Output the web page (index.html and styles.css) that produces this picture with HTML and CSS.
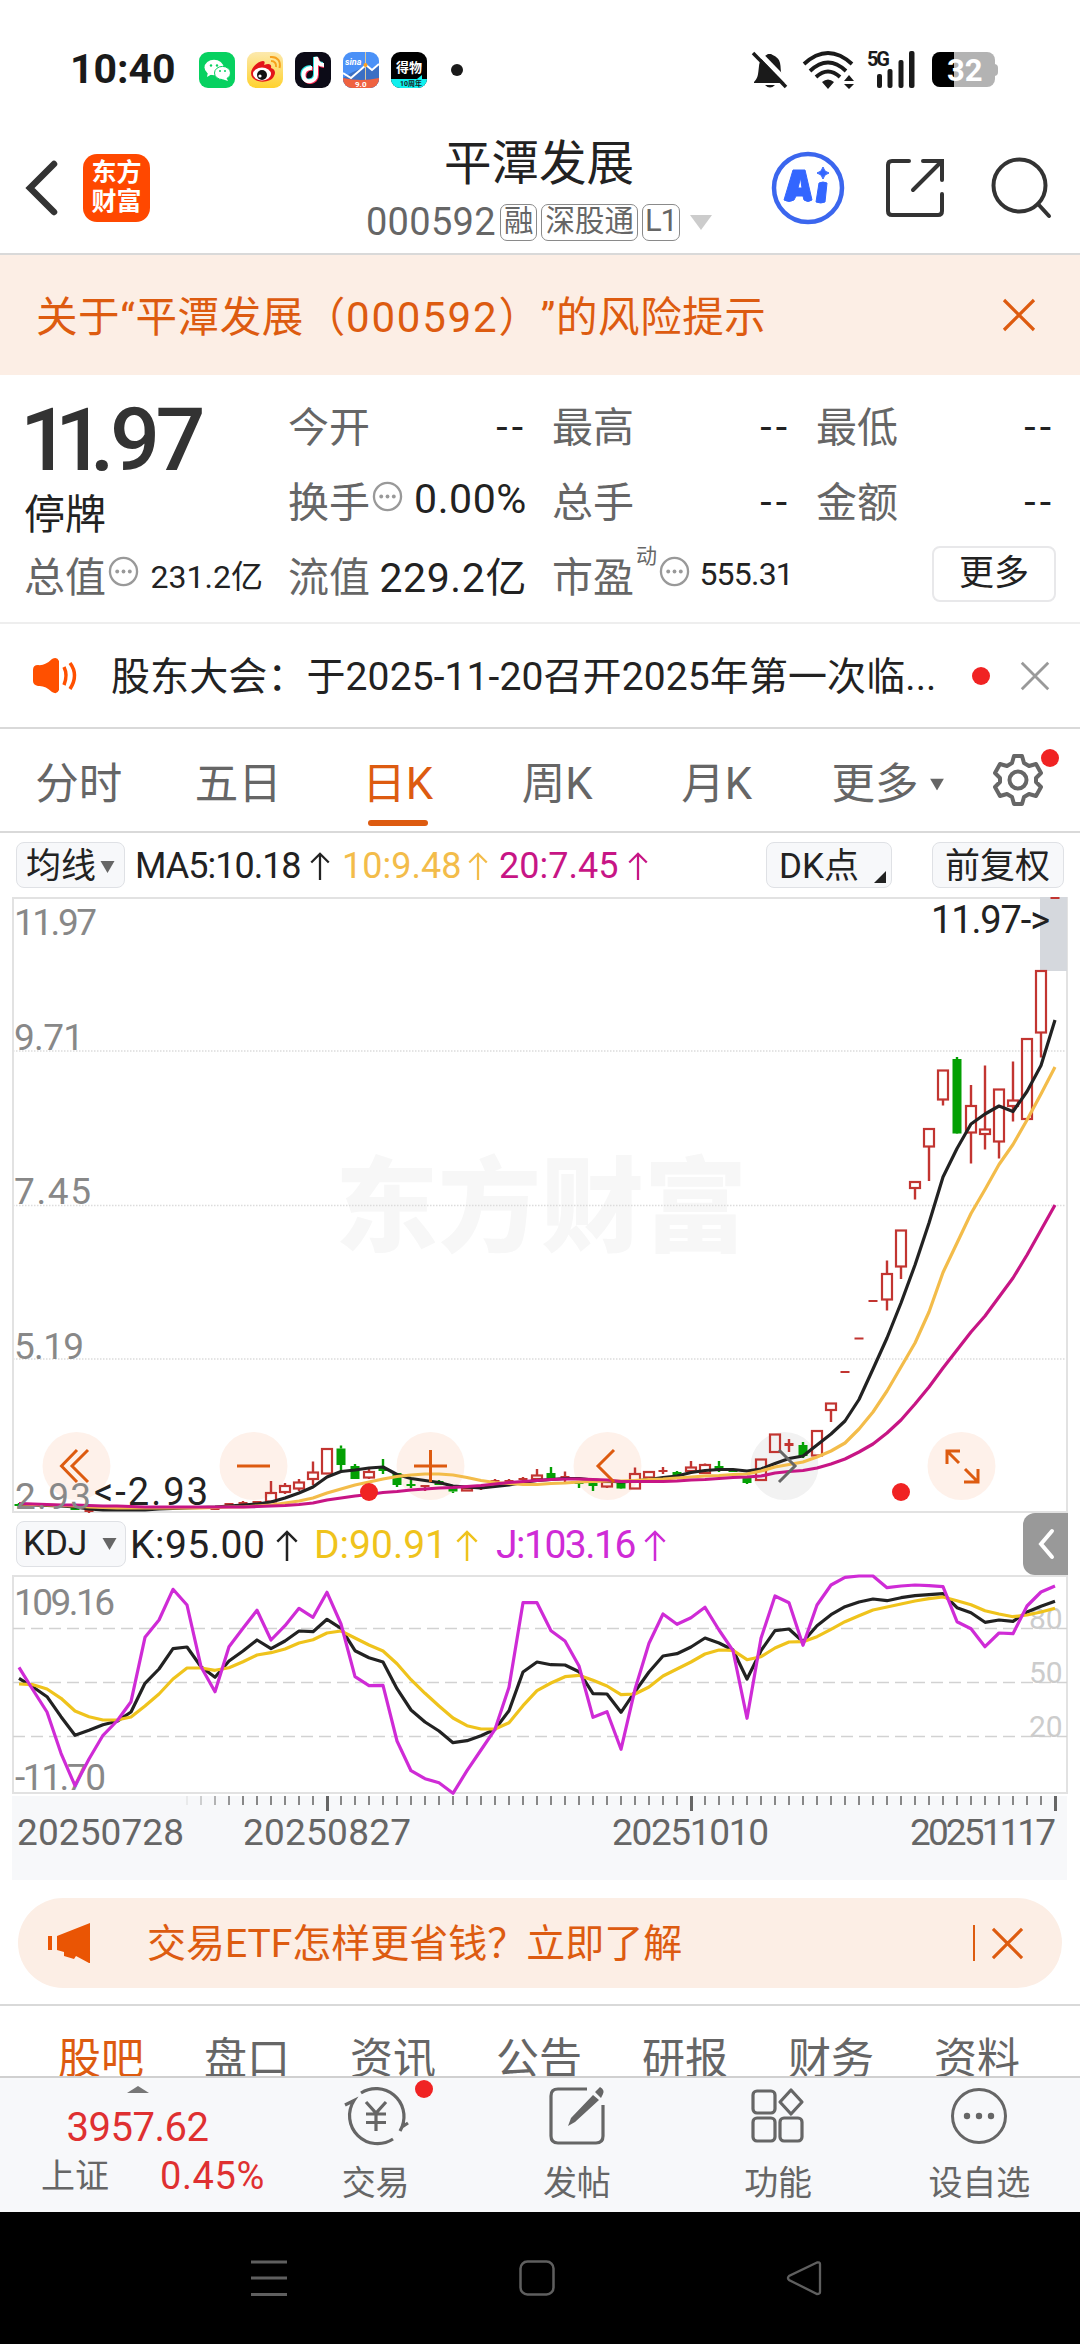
FILE: index.html
```html
<!DOCTYPE html>
<html lang="zh-CN">
<head>
    <meta charset="UTF-8">
    <meta name="viewport" content="width=device-width, initial-scale=1.0">
    <title>平潭发展 000592</title>
    <link rel="stylesheet" href="styles.css">
</head>
<body>
    <!-- shared icons -->
    <svg class="defs" width="0" height="0">
        <symbol id="up" viewBox="0 0 22 32"><path d="M11 32V2M1 12L11 2L21 12" fill="none" stroke="currentColor" stroke-width="2.6"/></symbol>
        <symbol id="down" viewBox="0 0 14 12"><path d="M0 0H14L7 12Z" fill="currentColor"/></symbol>
        <symbol id="cross" viewBox="0 0 34 34"><path d="M2 2L32 32M32 2L2 32" fill="none" stroke="currentColor" stroke-width="3.2"/></symbol>
        <symbol id="info" viewBox="0 0 32 32"><circle cx="16" cy="16" r="14" fill="none" stroke="#999" stroke-width="2.4"/><circle cx="9.5" cy="16" r="2" fill="#999"/><circle cx="16" cy="16" r="2" fill="#999"/><circle cx="22.5" cy="16" r="2" fill="#999"/></symbol>
    </svg>

    <div class="status-bar">
        <span class="clock">10:40</span>
        <div class="apps">
            <svg viewBox="0 0 36 36"><rect width="36" height="36" rx="9" fill="#07d160"/><ellipse cx="15" cy="15.5" rx="9.5" ry="7.8" fill="#fff"/><path d="M9 20L8 25L13 22Z" fill="#fff"/><ellipse cx="23.5" cy="21" rx="8" ry="6.6" fill="#fff" stroke="#07d160" stroke-width="1"/><path d="M27 25L29 29L23 27Z" fill="#fff"/><circle cx="12" cy="13.5" r="1.2" fill="#07d160"/><circle cx="18" cy="13.5" r="1.2" fill="#07d160"/><circle cx="21" cy="19" r="1" fill="#07d160"/><circle cx="26" cy="19" r="1" fill="#07d160"/></svg>
            <svg viewBox="0 0 36 36"><defs><linearGradient id="wb" x2="0" y2="1"><stop stop-color="#fce9ae"/><stop offset="1" stop-color="#ffd22e"/></linearGradient></defs><rect width="36" height="36" rx="9" fill="url(#wb)"/><path d="M4 21C4 16 11 9 16 9C19 9 17 13 17 13C22 11 25 12 24 16C28 17 29 21 27 24C24 32 4 32 4 21Z" fill="#e3151a"/><ellipse cx="15" cy="22" rx="9" ry="6.5" fill="#fff"/><circle cx="15" cy="23" r="5" fill="#111"/><circle cx="13" cy="24" r="1.6" fill="#fff"/><path d="M24 9C28 9 29.5 12 29 15M23 5C31 4 34 10 32.5 16" fill="none" stroke="#f6a01c" stroke-width="2"/></svg>
            <svg viewBox="0 0 36 36"><rect width="36" height="36" rx="9" fill="#0c0b17"/><g fill="none" stroke-width="4"><path d="M16 15C10 15 7 19 7.5 23C8.5 31 20 30 20 22V5C21 10 24 12 28 12" stroke="#29e5e5"/><path d="M18 17C12 16 9 20 9.5 25C10.5 33 22 31 22 23V6C23 12 26 14 29 14" stroke="#fb2c55"/><path d="M17 16C11 15.5 8 19.5 8.5 24C9.5 32 21 30.5 21 22.5V5C22 11 25 13 29 13" stroke="#fff"/></g></svg>
            <svg viewBox="0 0 36 36"><clipPath id="sc"><rect width="36" height="36" rx="9"/></clipPath><g clip-path="url(#sc)"><rect width="36" height="36" fill="#4b91f7"/><path d="M0 26L8 21L23 14L29 19L36 12V36H0Z" fill="#3b6fc4"/><path d="M0 21L8 26L23 13L29 18L36 12" fill="none" stroke="#fff" stroke-width="2"/><path d="M22.5 0V28" stroke="#d9c9a0"/><path d="M0 26Q18 30 36 26V36H0Z" fill="#ef6240"/><circle cx="22.5" cy="13" r="2" fill="#ffa21f"/></g><text x="2" y="13" font-size="9" font-style="italic">sina</text><text x="12" y="34.5" font-size="8">9.0</text></svg>
            <svg viewBox="0 0 36 36"><clipPath id="dw"><rect width="36" height="36" rx="9"/></clipPath><g clip-path="url(#dw)"><rect width="36" height="36"/><rect y="27" width="36" height="9" fill="#0ff0ee"/><path d="M26 27L31 23V27Z" fill="#0ff0ee"/></g><text x="5" y="20" font-size="13">得物</text><text x="9" y="34" font-size="7" class="dark">10周年</text></svg>
        </div>
        <span class="more-dot"></span>
        <div class="signals">
            <svg width="36" height="38" viewBox="0 0 36 38"><path d="M2 31C6 27 6 24 7 15C8 6 14 5 16 3H19C22 5 28 6 28.5 15C29 24 30 27 34 31V32H2Z" fill="#1a1a1a"/><path d="M13 34H23Q18 39 13 34Z" fill="#1a1a1a"/><path d="M3 -2L38 34" stroke="#fff" stroke-width="5"/><path d="M1 2L34 36" stroke="#1a1a1a" stroke-width="3.5"/></svg>
            <svg width="52" height="38" viewBox="0 0 52 38"><g fill="none" stroke="#1a1a1a" stroke-width="3.8"><path d="M1 13Q25 -9 49 13"/><path d="M7 20Q25 3 43 20"/><path d="M13 26Q25 15 37 26"/></g><path d="M19 31Q25 26 31 31L25 38ZM41 30L46 24L51 30ZM41 33H51L46 38Z" fill="#1a1a1a"/></svg>
            <svg class="cell-signal" width="50" height="40" viewBox="0 0 50 40"><text x="0" y="16" font-size="20" textLength="23" class="dark">5G</text><g fill="#1a1a1a"><rect x="10" y="24" width="5" height="14" rx="2"/><rect x="20.5" y="19" width="5" height="19" rx="2"/><rect x="31.5" y="10" width="5" height="28" rx="2"/><rect x="42" y="1" width="5.5" height="37" rx="2"/></g></svg>
            <svg width="66" height="36" viewBox="0 0 66 36"><clipPath id="bt"><rect width="63" height="35" rx="8"/></clipPath><rect x="55" y="12" width="11" height="12" rx="4" fill="#b3b3b3"/><g clip-path="url(#bt)"><rect width="66" height="36" fill="#b3b3b3"/><rect width="22" height="36"/></g><text x="15" y="28.5" font-size="31">32</text></svg>
        </div>
    </div>

    <header class="header">
        <div class="header-left">
            <svg width="32" height="56" viewBox="0 0 32 56"><path d="M28 4L4 28L28 52" fill="none" stroke="#333" stroke-width="6.5" stroke-linecap="round"/></svg>
            <div class="logo">东方<br>财富</div>
        </div>
        <div class="header-title">
            <h1>平潭发展</h1>
            <div class="code"><span class="code-num">000592</span><span class="tag">融</span><span class="tag">深股通</span><span class="tag level">L1</span><svg width="22" height="15" viewBox="0 0 22 15"><path d="M0 0H22L11 15Z" fill="#ccc"/></svg></div>
        </div>
        <div class="header-right">
            <svg width="74" height="76" viewBox="0 0 74 76"><circle cx="37" cy="38" r="34" fill="none" stroke="#3b66ee" stroke-width="4.5"/><path d="M22 20H34L41 50Q37 53 33 50L32 46H25L23 50Q18 53 13 50ZM27 38H31L29.5 28ZM48 33Q52 31 56 33L54 52Q50 54 45 52ZM52 17Q53 22 58 23Q53 24 52 29Q51 24 46 23Q51 22 52 17Z" fill="#3366ff" fill-rule="evenodd" stroke="#3366ff" stroke-linejoin="round"/></svg>
            <svg width="60" height="60" viewBox="0 0 60 60"><path d="M24 3H7Q3 3 3 7V53Q3 57 7 57H53Q57 57 57 53V36M38 3H57V22M56 4L28 32" fill="none" stroke="#333" stroke-width="4" stroke-linecap="round"/></svg>
            <svg class="search" width="60" height="62" viewBox="0 0 60 62"><circle cx="27.5" cy="28.5" r="26" fill="none" stroke="#333" stroke-width="4"/><path d="M46 47L57 59" stroke="#333" stroke-width="4" stroke-linecap="round"/></svg>
        </div>
    </header>

    <div class="warning">
        <span class="warning-text">关于“平潭发展（<span class="warning-code">000592</span>）<i>”</i>的风险提示</span>
        <svg width="34" height="34"><use href="#cross"/></svg>
    </div>

    <section class="quote">
        <div class="price-box">
            <div class="price"><i>11</i>.97</div>
            <div class="state">停牌</div>
        </div>
        <div class="cell"><label>今开</label><b class="none">--</b></div>
        <div class="cell"><label>最高</label><b class="none">--</b></div>
        <div class="cell"><label>最低</label><b class="none">--</b></div>
        <div class="cell"><label>换手</label><svg class="info"><use href="#info"/></svg><b>0.00%</b></div>
        <div class="cell"><label>总手</label><b class="none">--</b></div>
        <div class="cell"><label>金额</label><b class="none">--</b></div>
        <div class="cell"><label>总值</label><svg class="info"><use href="#info"/></svg><b class="small">231.2亿</b></div>
        <div class="cell"><label>流值</label><b>229.2亿</b></div>
        <div class="cell"><label>市盈</label><sup>动</sup><svg class="info"><use href="#info"/></svg><b class="small pe">555.31</b></div>
        <div class="cell end"><button class="more-btn">更多</button></div>
    </section>

    <div class="notice">
        <svg width="46" height="38" viewBox="0 0 46 38"><path d="M5 8Q12 9 19 2Q24 -1 26 4V33Q24 38 19 35Q12 28 5 29Q0 28 0 24V13Q0 8 5 8Z" fill="#ff5000"/><path d="M31 10Q35 18 31 28M37 6Q46 18 37 32" fill="none" stroke="#ff5000" stroke-width="3.5"/></svg>
        <span class="notice-text">股东大会：于2025-11-20召开2025年第一次临...</span>
        <span class="dot"></span>
        <svg class="gray" width="30" height="30" viewBox="0 0 34 34"><use href="#cross"/></svg>
    </div>

    <nav class="periods">
        <a>分时</a>
        <a>五日</a>
        <a class="active">日K</a>
        <a>周K</a>
        <a>月K</a>
        <a class="with-arrow">更多<svg width="14" height="13" viewBox="0 0 14 12"><use href="#down"/></svg></a>
        <span class="gear">
            <svg width="54" height="54" viewBox="0 0 54 54"><g fill="none" stroke="#666" stroke-width="4"><path d="M21 10L23 3H31L33 10L38 13L45 11L50 20L45 25V29L50 34L45 43L38 41L33 44L31 51H23L21 44L16 41L9 43L4 34L9 29V25L4 20L9 11L16 13Z" stroke-linejoin="round"/><circle cx="27" cy="27" r="8.5"/></g></svg>
            <span class="dot"></span>
        </span>
    </nav>

    <div class="legend">
        <span class="chip ma">均线<svg width="15" height="12"><use href="#down"/></svg></span>
        <span class="val m5"><span>MA5:10.18</span><svg width="22" height="28"><use href="#up"/></svg></span>
        <span class="val m10"><span>10:9.48</span><svg width="22" height="28"><use href="#up"/></svg></span>
        <span class="val m20"><span>20:7.45</span><svg width="22" height="28"><use href="#up"/></svg></span>
        <span class="chip dk">DK点<svg width="12" height="12" viewBox="0 0 12 12"><path d="M12 0V12H0Z" fill="#222"/></svg></span>
        <span class="chip fq">前复权</span>
    </div>

    <svg class="chart" id="kline" width="1056" height="616" viewBox="12 0 1056 616">
        <text class="watermark" x="335" y="347" textLength="412">东方财富</text>
        <g class="grid"><path d="M13 154H1067M13 308.5H1067M13 462H1067"/></g>
        <rect class="frame" x="13" y="1" width="1054" height="614"/>
        <rect x="1040" y="0" width="27" height="74" fill="#d5d8dd"/>
        <g class="scale">
            <text x="14" y="38" textLength="83">11.97</text>
            <text x="14" y="153" textLength="70">9.71</text>
            <text x="14" y="307" textLength="77">7.45</text>
            <text x="14" y="462" textLength="70">5.19</text>
        </g>
        <g class="pads">
            <circle cx="76.5" cy="569" r="34"/>
            <circle cx="253.5" cy="569" r="34"/>
            <circle cx="430.5" cy="569" r="34"/>
            <circle cx="607.5" cy="569" r="34"/>
            <circle cx="784.5" cy="569" r="34" class="off"/>
            <circle cx="961.5" cy="569" r="34"/>
        </g>
        <g id="candles"></g>
        <g id="ma"></g>
        <g class="pad-icons">
            <path d="M77 553L61.5 569L77 585M88 553L72 569L88 585"/>
            <path d="M237 569H270"/>
            <path d="M414 569H447M430.5 553V585"/>
            <path d="M614 553L598 569L614 585"/>
            <path d="M779 553L795 569L779 585" class="off"/>
            <path d="M947 567V554H960M947 554L959 566M978 572V585H964M977 584L965 572"/>
        </g>
        <text class="scale" x="15" y="612" textLength="76">2.93</text>
        <text class="mark" x="94" y="608" textLength="114">&lt;-2.93</text>
        <text class="mark" x="931" y="36" textLength="119">11.97-&gt;</text>
        <g fill="#f02323"><circle cx="369" cy="595" r="9"/><circle cx="901" cy="595" r="9"/></g>
    </svg>

    <div class="legend kdj">
        <span class="chip kd">KDJ<svg width="15" height="12"><use href="#down"/></svg></span>
        <span class="val k"><span>K:95.00</span><svg width="22" height="31"><use href="#up"/></svg></span>
        <span class="val d"><span>D:90.91</span><svg width="22" height="31"><use href="#up"/></svg></span>
        <span class="val j"><span>J:103.16</span><svg width="22" height="31"><use href="#up"/></svg></span>
        <span class="handle"><svg width="16" height="30" viewBox="0 0 16 30"><path d="M14 2L3 15L14 28" fill="none" stroke="#fff" stroke-width="4" stroke-linecap="round"/></svg></span>
    </div>

    <svg class="chart" id="kdj" width="1056" height="220" viewBox="12 0 1056 220">
        <rect class="frame" x="13" y="1" width="1054" height="217"/>
        <g class="levels"><path d="M13 53.5H1067M13 107.5H1067M13 161.5H1067"/></g>
        <g class="scale">
            <text x="14" y="40" textLength="101">109.16</text>
            <text x="15" y="215" textLength="91">-11.70</text>
        </g>
        <g class="level-text">
            <text x="1029" y="54">80</text>
            <text x="1029" y="108">50</text>
            <text x="1029" y="162">20</text>
        </g>
        <g id="lines"></g>
    </svg>

    <svg class="axis" width="1055" height="84" viewBox="12 0 1055 84">
        <g id="ticks"></g>
        <g class="dates">
            <text x="17" y="49" textLength="167">20250728</text>
            <text x="243" y="49" textLength="168">20250827</text>
            <text x="612" y="49" textLength="157">20251010</text>
            <text x="910" y="49" textLength="146">20251117</text>
        </g>
    </svg>

    <div class="promo">
        <svg width="46" height="40" viewBox="0 0 46 40"><path d="M9 13L42 0V40H41L28 33L26 36L16 33V29L9 27ZM0 13H4V27H0Z" fill="#ea5504"/></svg>
        <span class="promo-text">交易ETF怎样更省钱？立即了解</span>
        <i class="bar"></i>
        <svg width="33" height="33" viewBox="0 0 34 34"><use href="#cross"/></svg>
    </div>

    <nav class="sections">
        <a class="active">股吧</a><a>盘口</a><a>资讯</a><a>公告</a><a>研报</a><a>财务</a><a>资料</a>
    </nav>

    <footer class="toolbar">
        <div class="index">
            <svg width="22" height="7" viewBox="0 0 22 7"><path d="M0 7L11 0L22 7Z" fill="#777"/></svg>
            <div class="index-value">3957.62</div>
            <div class="index-row"><span>上证</span><em>0.45%</em></div>
        </div>
        <div class="tool">
            <svg width="66" height="60" viewBox="0 0 66 60"><g fill="none" stroke="#666" stroke-width="3.2"><path d="M18 7A28 28 0 0 1 59 41M2 19L11 14.5A28 28 0 0 0 50 53M59 41L65 37M59 41L57 45"/><path d="M23 16L33 27L43 16M33 27V45M23 28H43M23 36.5H43"/></g></svg>
            <span>交易</span>
            <i class="dot"></i>
        </div>
        <div class="tool">
            <svg width="60" height="60" viewBox="0 0 60 60"><path d="M40 3H11Q4 3 4 10V50Q4 57 11 57H49Q56 57 56 50V19" fill="none" stroke="#666" stroke-width="3.2"/><path d="M46 9L52 14L28 36L21 40L24 32ZM48 6L53 1Q58 4 56 8L54 12Z" fill="#666"/></svg>
            <span>发帖</span>
        </div>
        <div class="tool">
            <svg width="60" height="60" viewBox="0 0 60 60"><g fill="none" stroke="#666" stroke-width="3.2"><rect x="5" y="5" width="22" height="22" rx="4"/><rect x="5" y="32" width="22" height="23" rx="4"/><rect x="32" y="32" width="22" height="23" rx="4"/><path d="M43 4L54 16L43 28L32 16Z" stroke-linejoin="round"/></g></svg>
            <span>功能</span>
        </div>
        <div class="tool">
            <svg width="60" height="60" viewBox="0 0 60 60"><circle cx="30" cy="30" r="26.5" fill="none" stroke="#666" stroke-width="3"/><g fill="#666"><circle cx="18" cy="30" r="3.2"/><circle cx="30" cy="30" r="3.2"/><circle cx="42" cy="30" r="3.2"/></g></svg>
            <span>设自选</span>
        </div>
    </footer>

    <div class="system-nav">
        <svg width="36" height="36" viewBox="0 0 36 36"><path d="M0 2H36M0 18H36M0 34.5H36" stroke="#5f5f5f" stroke-width="3"/></svg>
        <svg width="36" height="36" viewBox="0 0 36 36"><rect x="1.5" y="1.5" width="33" height="33" rx="7" fill="none" stroke="#5f5f5f" stroke-width="2.5"/></svg>
        <svg width="36" height="36" viewBox="0 0 36 36"><path d="M31 2.5L3 16Q1 18 3 20L31 34Q34 34 34 32V4Q34 2 31 2.5Z" fill="none" stroke="#5f5f5f" stroke-width="2.3"/></svg>
    </div>

    <script src="chart.js"></script>
</body>
</html>
```

FILE: styles.css
```css
* {
    box-sizing: border-box;
}
body {
    width: 1080px;
    height: 2344px;
    margin: 0;
    overflow: hidden;
    background: #fff;
    color: #222;
    font-family: Roboto, "Noto Sans CJK SC", sans-serif;
    font-size: 36px;
}
svg {
    display: block;
    flex: none;
    overflow: visible;
}
i, em {
    font-style: normal;
}
.defs {
    position: absolute;
}
.dot {
    width: 18px;
    height: 18px;
    border-radius: 50%;
    background: #f02323;
}

/* status bar */
.status-bar {
    display: flex;
    align-items: center;
    height: 140px;
    padding: 0 82px 0 70px;
}
.clock {
    width: 129px;
    margin-top: -2px;
    font-size: 41px;
    font-weight: bold;
    line-height: 50px;
    color: #1a1a1a;
}
.apps {
    display: flex;
    gap: 12px;
}
.apps svg {
    width: 36px;
    height: 36px;
}
.status-bar text {
    font-weight: bold;
    fill: #fff;
}
.status-bar .dark {
    fill: #1a1a1a;
}
.more-dot {
    width: 12px;
    height: 12px;
    margin-left: 24px;
    border-radius: 50%;
    background: #1a1a1a;
}
.signals {
    display: flex;
    align-items: center;
    gap: 15px;
    margin-left: auto;
}
.cell-signal {
    margin-left: -3px;
}

/* header */
.header {
    display: flex;
    justify-content: space-between;
    height: 115px;
    padding: 0 28px 0 26px;
    border-bottom: 2px solid #d9d9d9;
}
.header-left,
.header-right {
    display: flex;
    align-items: center;
    width: 284px;
    height: 95px;
}
.header-left {
    gap: 25px;
}
.logo {
    width: 67px;
    height: 68px;
    padding-top: 4px;
    border-radius: 14px;
    background: #ff4800;
    color: #fff;
    font-size: 25px;
    font-weight: bold;
    line-height: 29px;
    text-align: center;
}
.header-title {
    text-align: center;
}
.header-title h1 {
    height: 56px;
    margin: 0;
    font-size: 47.5px;
    font-weight: normal;
    line-height: 48px;
}
.code {
    display: flex;
    align-items: center;
    justify-content: center;
    gap: 4px;
    height: 52px;
    color: #666;
}
.code-num {
    font-size: 38px;
    letter-spacing: 0.3px;
}
.tag {
    height: 37px;
    padding: 0 3px;
    border: 1.5px solid #8a8a8a;
    border-radius: 7px;
    font-size: 29.5px;
    line-height: 32px;
}
.level {
    padding: 0 2px;
    font-size: 31px;
    letter-spacing: -1px;
}
.code svg {
    margin-left: 6px;
}
.header-right {
    justify-content: flex-end;
    gap: 40px;
}
.search {
    margin-left: 7px;
}

/* risk warning */
.warning {
    display: flex;
    align-items: center;
    justify-content: space-between;
    height: 120px;
    padding: 0 44px 0 36px;
    background: #fceee5;
    color: #dd5b10;
    font-size: 41.5px;
}
.warning-text {
    margin-top: -3px;
    letter-spacing: 0.6px;
    text-spacing-trim: space-all;
}
.warning-code {
    font-size: 42px;
    letter-spacing: 1.8px;
}

/* quote */
.quote {
    display: grid;
    grid-template-columns: repeat(4, 238px);
    grid-template-rows: repeat(3, 75px);
    column-gap: 26px;
    height: 249px;
    padding: 11px 25px 0;
    border-bottom: 2px solid #eee;
}
.price-box {
    grid-row: span 2;
}
.price {
    height: 103px;
    font-size: 88px;
    font-weight: 500;
    line-height: 107px;
    letter-spacing: -4.5px;
    color: #333;
}
.price i {
    margin-left: -5px;
    letter-spacing: -15px;
}
.state {
    height: 50px;
    margin-left: -1px;
    font-size: 41px;
    line-height: 52px;
}
.cell {
    display: flex;
    align-items: center;
    height: 75px;
    white-space: nowrap;
}
.cell label {
    margin-left: -1px;
    color: #666;
    font-size: 41px;
}
.cell b {
    margin-left: auto;
    font-size: 41px;
    font-weight: normal;
    letter-spacing: 0.6px;
}
.cell .small {
    font-size: 32px;
    letter-spacing: 0;
}
.cell .pe {
    margin-right: -2px;
    letter-spacing: -0.8px;
}
.cell .none {
    padding-top: 6px;
    letter-spacing: 4px;
}
.cell sup {
    align-self: flex-start;
    margin-left: 2px;
    color: #666;
    font-size: 21px;
    line-height: 40px;
}
.info {
    width: 31px;
    height: 31px;
    margin: -4px 0 0 2px;
}
.cell.end {
    justify-content: flex-end;
}
.more-btn {
    width: 124px;
    height: 56px;
    margin-right: -1px;
    padding: 0;
    border: 2px solid #e8e8ea;
    border-radius: 8px;
    background: #fff;
    color: #222;
    font: 35px/50px Roboto, "Noto Sans CJK SC", sans-serif;
}

/* notice */
.notice {
    display: flex;
    align-items: center;
    height: 105px;
    padding: 0 30px 0 33px;
    border-bottom: 2px solid #d9d9d9;
}
.notice-text {
    width: 893px;
    margin-top: -5px;
    padding-left: 32px;
    font-size: 39px;
    letter-spacing: 0.1px;
    white-space: nowrap;
}
.gray {
    margin-left: 30px;
    color: #999;
}

/* period tabs */
.periods {
    display: flex;
    align-items: center;
    height: 104px;
    border-bottom: 2px solid #d9d9d9;
    color: #666;
    font-size: 43.5px;
}
.periods a {
    position: relative;
    left: -1px;
    width: 159.5px;
    padding-top: 9px;
    line-height: 100px;
    text-align: center;
}
.periods .active {
    color: #dd5b10;
}
.periods .active::after {
    content: "";
    position: absolute;
    bottom: 9px;
    left: 50px;
    width: 60px;
    height: 6px;
    border-radius: 3px;
    background: #dd5b10;
}
.periods .with-arrow {
    display: flex;
    align-items: center;
    justify-content: center;
    gap: 11px;
    width: 182px;
}
.gear {
    position: relative;
    margin: 0 35px 0 auto;
}
.gear .dot {
    position: absolute;
    top: -4px;
    right: -14px;
}

/* indicator legends */
.legend {
    display: flex;
    align-items: center;
    height: 64px;
    padding: 0 16px;
    line-height: 44px;
    white-space: nowrap;
}
.chip {
    display: flex;
    align-items: center;
    justify-content: space-between;
    height: 46px;
    padding: 3px 9px 0;
    border: 1.5px solid #dfe1e5;
    border-radius: 8px;
    background: #f7f8fa;
    font-size: 35px;
}
.chip svg {
    color: #666;
}
.chip.ma {
    width: 109px;
}
.chip.dk {
    width: 126px;
    margin-left: auto;
    padding: 3px 5px 0 12px;
}
.dk svg {
    align-self: flex-end;
    margin-bottom: 4px;
}
.chip.fq {
    width: 132px;
    margin-left: 40px;
    padding: 3px 12px 0;
}
.val {
    display: flex;
    align-items: center;
    justify-content: space-between;
    padding-top: 2px;
}
.m5 {
    width: 196px;
    margin-left: 10px;
    letter-spacing: -1px;
}
.m10 {
    width: 147px;
    margin-left: 11px;
    color: #f3bc4a;
}
.m20 {
    width: 150px;
    margin-left: 10px;
    color: #c71585;
}
.kdj {
    height: 62px;
    padding-right: 12px;
    line-height: 44px;
    font-size: 39px;
}
.chip.kd {
    width: 110px;
    padding: 0 8px 0 6px;
}
.k {
    width: 168px;
    margin-left: 4px;
    letter-spacing: 0.5px;
}
.d {
    width: 164px;
    margin-left: 16px;
    color: #efc31c;
}
.j {
    width: 170px;
    margin-left: 18px;
    letter-spacing: -1.5px;
    color: #cf2bd6;
}
.handle {
    display: flex;
    align-items: center;
    justify-content: center;
    width: 45px;
    height: 62px;
    margin-left: auto;
    border-radius: 12px 0 0 12px;
    background: #999;
}

/* charts */
.chart,
.axis {
    margin-left: 12px;
}
.frame {
    fill: none;
    stroke: #e2e2e2;
    stroke-width: 2;
}
.grid {
    stroke: #dcdcdc;
    stroke-width: 1.5;
    stroke-dasharray: 1.5 1.5;
}
.watermark {
    font-size: 103px;
    font-weight: 900;
    fill: #f7f7f7;
}
.scale {
    font-size: 37px;
    fill: #888;
}
.mark {
    font-size: 38px;
    fill: #222;
}
.pads circle {
    fill: #fef1ea;
}
.pads .off {
    fill: #f2f2f2;
}
.pad-icons {
    fill: none;
    stroke: #dd5b10;
    stroke-width: 3;
}
.pad-icons .off {
    stroke: #666;
}
.levels {
    stroke: #d2d2d2;
    stroke-width: 1.5;
    stroke-dasharray: 12 6;
}
.level-text {
    font-size: 30px;
    fill: #ccc;
}
.line {
    fill: none;
    stroke-width: 3.2;
    stroke-linejoin: round;
}
.axis {
    margin-top: 1px;
    background: #f7f8fa;
}
.dates {
    font-size: 37px;
    fill: #666;
}

/* promo */
.promo {
    display: flex;
    align-items: center;
    height: 90px;
    margin: 18px 18px 16px;
    padding: 0 38px 0 30px;
    border-radius: 45px;
    background: #fceee5;
    color: #dd5b10;
}
.promo-text {
    margin: -7px 0 0 53px;
    font-size: 39px;
}
.bar {
    width: 2px;
    height: 36px;
    margin: 0 16px 0 auto;
    background: #dd5b10;
}

/* section tabs, cut off by the toolbar */
.sections {
    display: flex;
    height: 72px;
    padding: 0 30px 0 28px;
    border-top: 2px solid #d9d9d9;
    overflow: hidden;
    color: #666;
    font-size: 43px;
    line-height: 107px;
}
.sections a {
    flex: 1;
    text-align: center;
}
.sections .active {
    color: #dd5b10;
}

/* bottom toolbar */
.toolbar {
    display: flex;
    height: 136px;
    border-top: 2px solid #d0d0d0;
    background: #f7f8fa;
    color: #666;
    font-size: 34px;
}
.index {
    width: 275px;
    padding-top: 8px;
}
.index svg {
    margin: 0 auto;
}
.index-value {
    margin-top: 8px;
    text-align: center;
    font-size: 40px;
    line-height: 54px;
    letter-spacing: -0.5px;
    color: #df3031;
}
.index-row {
    display: flex;
    justify-content: space-between;
    padding: 0 8px 0 41px;
    line-height: 43px;
}
.index-row em {
    width: 107px;
    font-size: 38px;
    letter-spacing: 0.6px;
    color: #df3031;
}
.tool {
    position: relative;
    display: flex;
    flex: 1;
    flex-direction: column;
    align-items: center;
    padding-top: 8px;
}
.tool span {
    line-height: 75px;
}
.tool .dot {
    position: absolute;
    top: 2px;
    left: 140px;
}

/* system navigation */
.system-nav {
    display: flex;
    justify-content: space-between;
    height: 132px;
    padding: 48px 258px 0 251px;
    background: #000;
}
```

FILE: chart.js
```js
const NS = 'http://www.w3.org/2000/svg';
const RED = '#c23531';
const GREEN = '#04a004';

// one trading day every 14px
const xAt = i => 19 + i * 14;

function add(parent, name, attrs) {
    const el = document.createElementNS(NS, name);
    for (const key in attrs) el.setAttribute(key, attrs[key]);
    document.getElementById(parent).appendChild(el);
}

function drawLine(parent, values, color, toY) {
    const points = values.map((v, i) => xAt(i) + ',' + toY(v).toFixed(1)).join(' ');
    add(parent, 'polyline', { class: 'line', points, stroke: color });
}

// day, top, bottom, high, low, type (r = hollow red, f = filled red, g = green, d = dash)
const candles = [
    [0, 607, 609, 606, 611, 'g'], [4, 610, 613, 610, 613, 'g'], [5, 612, 615, 612, 616, 'f'],
    [9, 612, 614, 612, 614, 'f'], [14, 611, 613, 611, 613, 'f'], [15, 606, 609, 606, 609, 'f'],
    [16, 605, 607, 604, 607, 'f'], [17, 604, 607, 604, 607, 'f'],
    [18, 596, 604.5, 584, 604.5, 'r'], [19, 589, 595, 586, 597, 'r'], [20, 585.5, 591.5, 582, 594, 'r'],
    [21, 575.5, 582, 564.5, 588, 'r'], [22, 552, 576.5, 552, 577, 'r'], [23, 551.5, 568, 548.5, 576, 'g'],
    [24, 569, 582, 567, 582, 'g'], [25, 575, 580.5, 572, 582, 'r'], [26, 571, 574, 562, 577, 'g'],
    [27, 576, 588, 576, 590, 'g'], [28, 587, 589, 583, 591, 'g'], [29, 588, 590, 588, 594, 'f'],
    [30, 584, 588, 583, 588, 'g'], [31, 590, 594.5, 590, 596, 'g'], [32, 591, 593.5, 591, 594, 'r'],
    [33, 590, 591.5, 590, 593, 'f'], [34, 583, 585, 582, 585, 'f'], [35, 583, 585, 582, 585, 'f'],
    [36, 581, 583, 580, 583, 'f'], [37, 578.5, 582, 572, 582, 'r'], [38, 576, 582, 570, 584, 'g'],
    [39, 579, 581, 574.5, 587, 'f'], [40, 585, 587, 585, 591, 'g'], [41, 586, 589, 585, 594, 'g'],
    [42, 585, 589.5, 584, 591, 'r'], [43, 585, 591.5, 585, 592, 'g'], [44, 577, 591.5, 570.5, 592, 'r'],
    [45, 575, 580.5, 574, 586, 'r'], [46, 573, 575, 570, 577, 'f'], [47, 575, 578, 574, 579, 'g'],
    [48, 570.5, 574, 564, 577, 'r'], [49, 568, 576, 566.5, 577, 'r'], [50, 569, 573, 564, 575, 'g'],
    [51, 573, 575, 573, 575, 'g'], [52, 580.5, 586, 579, 587, 'g'], [53, 562.5, 583, 562, 584, 'r'],
    [54, 537.5, 555, 537, 555, 'r'], [55, 546, 549, 542, 555, 'f'], [56, 548, 559, 545, 561, 'g'],
    [57, 534, 558.5, 534, 560.5, 'r'], [58, 506.5, 513, 506, 525, 'r'], [59, 474, 476, 474, 476, 'd'],
    [60, 440.5, 442.5, 440, 442, 'd'], [61, 403, 405, 403, 405, 'd'], [62, 377, 402.5, 363.5, 413.5, 'r'],
    [63, 333.5, 369.5, 333, 382, 'r'], [64, 285, 291, 285, 302.5, 'r'], [65, 232, 249.5, 232, 284, 'r'],
    [66, 173.5, 202.5, 173, 208.5, 'r'], [67, 162, 236.5, 160, 237, 'g'], [68, 209, 235.5, 188, 266.5, 'r'],
    [69, 232.5, 237, 168.5, 252.5, 'r'], [70, 192.5, 244.5, 192, 261.5, 'r'], [71, 203.5, 209, 164.5, 224.5, 'r'],
    [72, 142, 222, 142, 222, 'r'], [73, 74, 135.5, 74, 160.5, 'r'], [74, 0, 2, 0, 2, 'd']
];

candles.forEach(([i, top, bottom, high, low, type]) => {
    const x = xAt(i);
    const color = type === 'g' ? GREEN : RED;
    if (type === 'd') {
        add('candles', 'rect', { x: x - 4.5, y: top, width: 9, height: 2, fill: color });
        return;
    }
    add('candles', 'path', { d: `M${x} ${high}V${top}M${x} ${bottom}V${low}`, stroke: color, 'stroke-width': 2.4 });
    add('candles', 'rect', {
        x: x - (type === 'r' ? 5 : 4.5), y: top, width: type === 'r' ? 10 : 9, height: bottom - top,
        fill: type === 'r' ? 'none' : color, stroke: type === 'r' ? color : 'none', 'stroke-width': 2.2
    });
});

const ma5 = [608, 608, 608.5, 609, 610, 612, 613, 613, 613, 613, 612, 611.5, 611, 610.5, 610, 609, 608, 607, 605, 601,
    596, 590, 580, 574.5, 573, 571, 570, 577.5, 581.5, 583.5, 585.5, 589, 590, 591, 589.5, 588, 585.5, 583.5, 582.5, 581.5,
    581.5, 583, 584, 585, 584, 582.5, 580.5, 579, 575.5, 573.5, 572.5, 572.5, 574, 572, 566.5, 561.5, 559, 548, 537, 524,
    502.5, 472, 441, 406, 368, 326, 280, 251.5, 227, 217, 209, 214.5, 194.5, 168.5, 123];
const ma10 = [607, 607.5, 608, 608.5, 609, 610, 610.5, 611, 611, 611, 611, 611, 611, 611, 610.5, 610, 610, 609, 608, 606,
    604, 601, 596, 592, 588, 585, 582, 579.5, 578, 577, 577, 578, 580.5, 583.5, 585.5, 586.5, 587.5, 587.5, 586.5, 586,
    585, 584.5, 584, 584, 583.5, 582.5, 582, 581, 580, 579, 578.5, 577.5, 577, 574, 570, 567.5, 565, 560, 554, 546,
    532, 515, 494, 470, 446, 415, 375.5, 346, 316.5, 292.5, 267.5, 247.5, 223, 197, 170];
const ma20 = [606.5, 607, 607.5, 608, 608, 608.5, 609, 609, 609.5, 610, 610, 610, 610, 610, 610, 610, 610, 609.5, 609, 608.5,
    607.5, 606, 603, 601, 599, 597.5, 595.5, 594.5, 593, 592, 591, 590.5, 589.5, 588.5, 587, 585.5, 584.5, 583.5, 582.5, 582,
    582, 582.5, 583, 584.5, 584.5, 584.5, 584.5, 584, 583, 582.5, 581.5, 580.5, 580, 579, 576, 574.5, 573.5, 571, 567, 562,
    555, 547, 536, 523, 507, 490, 471, 453, 435, 419, 400, 381, 358, 333, 308];
const same = v => v;
drawLine('ma', ma5, '#222', same);
drawLine('ma', ma10, '#f3bc4a', same);
drawLine('ma', ma20, '#c71585', same);

// KDJ samples, in thirds of a pixel
const k = [355, 381, 410, 470, 526, 511, 494, 484, 456, 370, 327, 266, 261, 320, 352, 303, 273, 240, 266, 243,
    213, 215, 178, 205, 272, 293, 306, 386, 450, 486, 513, 548, 542, 527, 508, 452, 336, 306, 314, 315,
    335, 401, 402, 457, 395, 336, 288, 281, 261, 234, 249, 270, 357, 272, 212, 207, 245, 197, 164, 140,
    126, 117, 122, 113, 107, 104, 101, 143, 158, 187, 180, 184, 156, 139, 124];
const d = [372, 374, 387, 415, 453, 470, 480, 480, 471, 438, 402, 357, 324, 324, 331, 323, 305, 285, 278, 267,
    249, 239, 219, 213, 234, 255, 273, 311, 359, 400, 438, 474, 497, 507, 507, 488, 437, 392, 369, 350,
    346, 361, 378, 404, 402, 381, 348, 327, 306, 282, 270, 271, 299, 290, 264, 246, 245, 230, 208, 185,
    167, 150, 141, 132, 123, 116, 111, 122, 134, 152, 162, 170, 165, 156, 145];
const j = [322, 390, 456, 580, 677, 597, 526, 483, 425, 232, 180, 88, 135, 320, 395, 260, 205, 151, 240, 197,
    145, 172, 97, 192, 350, 377, 376, 543, 632, 656, 668, 700, 632, 570, 508, 382, 128, 128, 212, 243,
    318, 472, 455, 568, 388, 250, 162, 193, 173, 142, 210, 272, 475, 235, 108, 128, 256, 135, 75, 52,
    48, 48, 83, 78, 75, 77, 80, 185, 206, 260, 219, 221, 138, 96, 78];
const panelY = v => v / 3 - 15;
drawLine('lines', k, '#222', panelY);
drawLine('lines', d, '#efc31c', panelY);
drawLine('lines', j, '#cf2bd6', panelY);

// date ticks fade in after the first label
for (let i = 12; i <= 74; i++) {
    const major = i === 22 || i === 48 || i === 74;
    add('ticks', 'rect', {
        x: xAt(i) - 1, y: 0, width: major ? 3 : 2, height: major ? 15 : 9,
        fill: major ? '#666' : '#888', opacity: Math.min(1, (i - 11.5) / 4)
    });
}
```
